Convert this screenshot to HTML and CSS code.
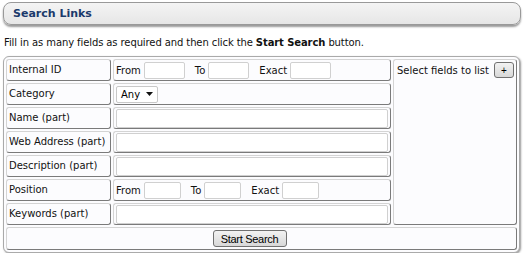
FILE: index.html
```html
<!DOCTYPE html>
<html lang="en">
<head>
  <meta charset="UTF-8">
  <title>Search Links</title>
  <link rel="stylesheet" href="styles.css">
</head>
<body>
  <div class="title-bar">
    <h2>Search Links</h2>
  </div>

  <p class="intro">Fill in as many fields as required and then click the <b>Start Search</b> button.</p>

  <div class="search-box">
    <table class="search-table">
      <tr>
        <td class="label"><div class="cell">Internal ID</div></td>
        <td class="value">
          <div class="cell range">
            From <input type="text" class="small">
            <span>To</span> <input type="text" class="small">
            <span>Exact</span> <input type="text" class="small">
          </div>
        </td>
        <td class="side" rowspan="7">
          <div class="cell">Select fields to list <button class="plus">+</button></div>
        </td>
      </tr>
      <tr>
        <td class="label"><div class="cell">Category</div></td>
        <td class="value">
          <div class="cell">
            <span class="fake-select">Any
              <svg width="7" height="4" viewBox="0 0 7 4"><path d="M0 0h7L3.5 4z" fill="#111"/></svg>
            </span>
          </div>
        </td>
      </tr>
      <tr>
        <td class="label"><div class="cell">Name (part)</div></td>
        <td class="value"><div class="cell"><input type="text" class="wide"></div></td>
      </tr>
      <tr>
        <td class="label"><div class="cell">Web Address (part)</div></td>
        <td class="value"><div class="cell"><input type="text" class="wide"></div></td>
      </tr>
      <tr>
        <td class="label"><div class="cell">Description (part)</div></td>
        <td class="value"><div class="cell"><input type="text" class="wide"></div></td>
      </tr>
      <tr>
        <td class="label"><div class="cell">Position</div></td>
        <td class="value">
          <div class="cell range">
            From <input type="text" class="tiny">
            <span>To</span> <input type="text" class="tiny">
            <span>Exact</span> <input type="text" class="tiny">
          </div>
        </td>
      </tr>
      <tr>
        <td class="label"><div class="cell">Keywords (part)</div></td>
        <td class="value"><div class="cell"><input type="text" class="wide"></div></td>
      </tr>
      <tr>
        <td class="footer" colspan="3"><button class="start">Start Search</button></td>
      </tr>
    </table>
  </div>
</body>
</html>
```

FILE: styles.css
```css
body {
  margin: 0;
  font-family: "DejaVu Sans", Verdana, sans-serif;
  font-size: 10px;
  color: #111;
  background: #fff;
}
.title-bar {
  margin: 2px 3px 0 3px;
  height: 21px;
  border: 1px solid #999;
  border-radius: 8px;
  background: linear-gradient(#f4f4f4, #e6e6e6);
  box-shadow: 0 2px 2px #9a9a9a;
}
.title-bar h2 {
  margin: 0;
  padding: 4px 0 0 9px;
  font-size: 11px;
  font-weight: bold;
  color: #1b3a6b;
}
.intro {
  margin: 12px 0 8px 4px;
  letter-spacing: -0.1px;
}
.search-box {
  margin: 0 4px 0 3px;
  border: 1px solid #aaa;
  border-radius: 6px;
  background: #fcfcfe;
  box-shadow: 1px 1px 2px #999;
}
.search-table {
  width: 100%;
  table-layout: fixed;
  border-spacing: 2px;
}
.search-table td {
  height: 20px;
  padding: 0 2px;
  border: 1px solid;
  border-color: #d4d4d4 #7a7a7a #7a7a7a #d4d4d4;
  border-radius: 3px;
}
.cell {
  display: flex;
  align-items: center;
  height: 20px;
  white-space: nowrap;
}
.label {
  width: 99px;
}
.label .cell {
  padding-bottom: 1px;
  height: 19px;
}
.value {
  width: 272px;
}
.side {
  vertical-align: top;
}
.side .cell {
  padding-left: 1px;
}
.range input[type="text"] {
  margin-left: 3px;
}
.range span {
  margin-left: 10px;
}
input[type="text"] {
  box-sizing: border-box;
  height: 17px;
  margin: 0;
  border: 1px solid #d0d0d0;
  border-radius: 2px;
  background: #fff;
}
input.small {
  width: 41px;
}
input.tiny {
  width: 37px;
}
input.wide {
  width: 273px;
  height: 19px;
}
.fake-select {
  display: inline-flex;
  align-items: center;
  gap: 6px;
  height: 15px;
  padding: 0 4px;
  border: 1px solid #c8c8c8;
  border-radius: 2px;
  background: #fff;
  color: #000;
}
button {
  font-family: "Liberation Sans", Arial, sans-serif;
  font-size: 11px;
  color: #000;
  border: 1px solid #707070;
  border-radius: 3px;
  background: linear-gradient(#f2f2f2, #d8d8d8);
  padding: 0;
}
.plus {
  width: 24px;
  height: 16px;
  margin-left: 5px;
  font-size: 10px;
}
.footer {
  text-align: center;
  height: 21px !important;
}
.start {
  width: 74px;
  height: 17px;
  margin-right: 24px;
  letter-spacing: -0.3px;
}
```
